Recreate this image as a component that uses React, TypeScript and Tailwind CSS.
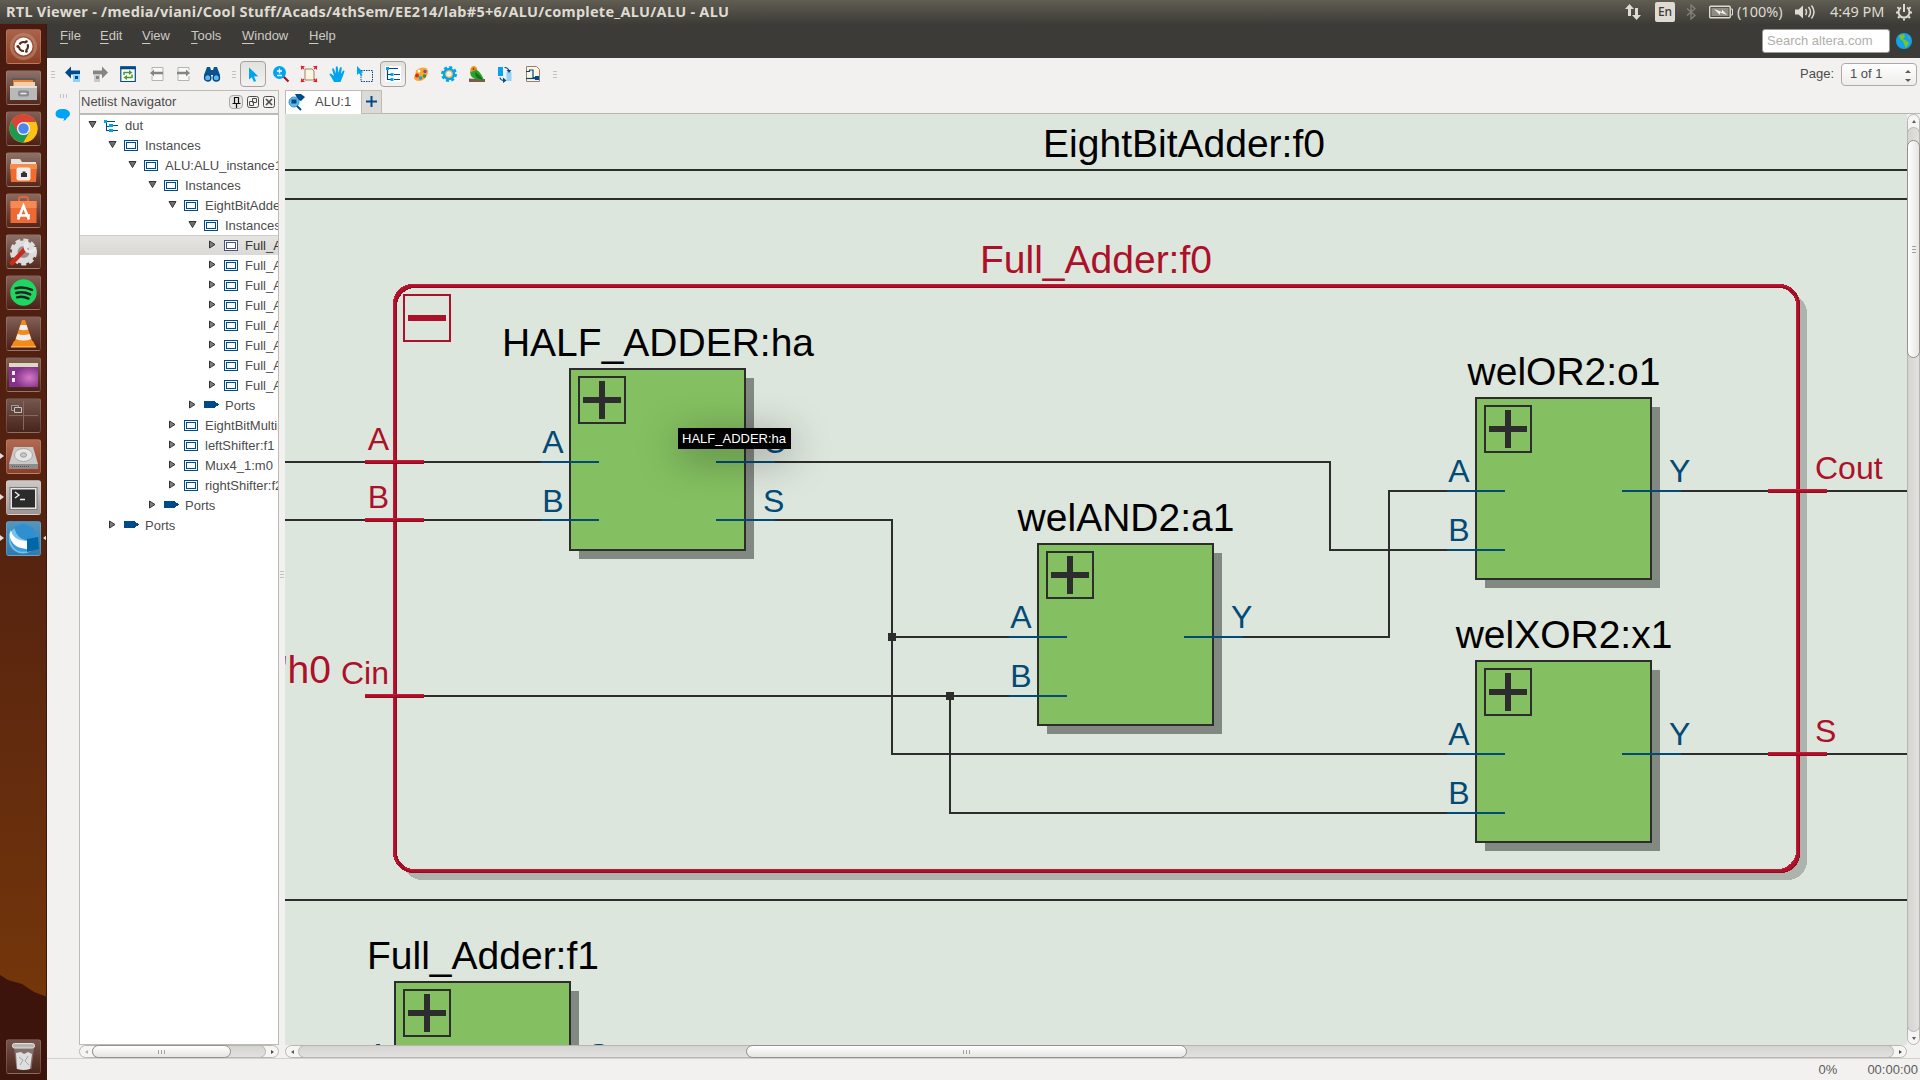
import React from "react";

type Kids = { children?: React.ReactNode };

/* ---------- small helpers ---------- */

function Icon({ size = 16, box = 16, children }: Kids & { size?: number; box?: number }) {
  return (
    <svg width={size} height={size} viewBox={`0 0 ${box} ${box}`} className="block shrink-0 overflow-visible">
      {children}
    </svg>
  );
}

function Grip({ vertical = false }: { vertical?: boolean }) {
  return (
    <div className={vertical ? "flex gap-[2px]" : "flex flex-col gap-[2px]"}>
      {[0, 1, 2].map((i) => (
        <div key={i} className={vertical ? "h-1 w-px bg-[#c4c2be]" : "h-px w-1 bg-[#c4c2be]"} />
      ))}
    </div>
  );
}

/* ---------- launcher ---------- */

const launcher: { bg: string; icon: React.ReactNode; running?: boolean; active?: boolean }[] = [
  {
    bg: "bg-linear-to-b from-[#a8644a] to-[#8e3f24]",
    icon: (
      <Icon size={35} box={35}>
        <circle cx="17.500" cy="17.500" r="12" fill="none" stroke="#c79582" strokeWidth="3" opacity=".5" />
        <circle cx="17.500" cy="17.500" r="9" fill="#fff" />
        <circle cx="17.500" cy="17.500" r="4.500" fill="none" stroke="#5a2a1c" strokeWidth="2.200" strokeDasharray="7.400 2" strokeDashoffset="3" />
        <circle cx="11.800" cy="17.500" r="1.400" fill="#5a2a1c" />
        <circle cx="20.400" cy="12.600" r="1.400" fill="#5a2a1c" />
        <circle cx="20.400" cy="22.400" r="1.400" fill="#5a2a1c" />
      </Icon>
    ),
  },
  {
    bg: "bg-linear-to-b from-[#8d7268] to-[#54291c]",
    icon: (
      <Icon size={35} box={35}>
        <path d="M6 8h23l1 10H5z" fill="#5f5a55" />
        <path d="M7 10h20v8H7z" fill="#f07f35" />
        <path d="M8 12h21v6H8z" fill="#f6cfa7" />
        <path d="M4 16h27v14H4z" fill="#b9b9b9" />
        <path d="M4 16h27v2H4z" fill="#e2e2e2" />
        <rect x="12" y="20.500" width="11" height="6" rx="2" fill="#8b8b8b" />
        <path d="M14.500 23.500h6" stroke="#eee" strokeWidth="1.500" />
      </Icon>
    ),
  },
  {
    bg: "bg-linear-to-b from-[#826056] to-[#4c2016]",
    icon: (
      <Icon size={35} box={35}>
        <circle cx="17.500" cy="17.500" r="14" fill="#fbc116" />
        <path d="M17.500 17.500 5.400 10.500A14 14 0 0 1 29.600 10.500z" fill="#db4437" />
        <path d="M5.400 10.500A14 14 0 0 0 17.500 31.500L23.600 21 17.500 17.500z" fill="#1b9b50" />
        <path d="M17.500 11h12.400A14 14 0 0 1 17.500 31.500L23.500 21z" fill="#fbc116" />
        <path d="M17.500 3.500A14 14 0 0 1 29.800 11H17.500L11.500 21 5.400 10.500A14 14 0 0 1 17.500 3.500z" fill="#db4437" />
        <circle cx="17.500" cy="17.500" r="6.600" fill="#f1f1f1" />
        <circle cx="17.500" cy="17.500" r="5.200" fill="#4a86ee" />
      </Icon>
    ),
  },
  {
    bg: "bg-linear-to-b from-[#8d7268] to-[#54291c]",
    icon: (
      <Icon size={35} box={35}>
        <path d="M5 7h9l2 3h14v8H5z" fill="#e8e2da" />
        <path d="M4 12h27l-1 18H5z" fill="#ee6c30" />
        <path d="M4 12h27v5H4z" fill="#f68c4c" />
        <rect x="10.500" y="15.500" width="14" height="13" rx="2" fill="#f3f0ec" />
        <path d="M15 21h1.500v-1.500h3V21H21v4h-6z" fill="#333" />
      </Icon>
    ),
  },
  {
    bg: "bg-linear-to-b from-[#8d6a5c] to-[#54251a]",
    icon: (
      <Icon size={35} box={35}>
        <path d="M13 11V6q0-2 2-2h5q2 0 2 2v5" fill="none" stroke="#e0673e" strokeWidth="2" />
        <path d="M4.500 8h26v22h-26z" fill="#ee6a35" />
        <path d="M4.500 8h26v7h-26z" fill="#f58a55" />
        <path d="M12 26.500 17.500 13 23 26.500M11 22.500h13" fill="none" stroke="#fff" strokeWidth="2.600" />
      </Icon>
    ),
  },
  {
    bg: "bg-linear-to-b from-[#8d7268] to-[#54291c]",
    icon: (
      <Icon size={35} box={35}>
        <circle cx="17.500" cy="18" r="11.500" fill="#dcdcdc" />
        <circle cx="17.500" cy="18" r="12" fill="none" stroke="#dcdcdc" strokeWidth="3" strokeDasharray="5 3" />
        <circle cx="17.500" cy="18" r="6" fill="#9b8f8b" />
        <path d="M6 29 20 14" stroke="#c92b1f" strokeWidth="4.500" strokeLinecap="round" />
        <path d="m19 15 4-4m-1-3a5 5 0 1 0 7 5" stroke="#e9e9e9" strokeWidth="3" fill="none" />
      </Icon>
    ),
  },
  {
    bg: "bg-linear-to-b from-[#826056] to-[#4c2016]",
    icon: (
      <Icon size={35} box={35}>
        <circle cx="17.500" cy="17.500" r="13.200" fill="#1ed760" />
        <path d="M9.500 13.300q8-2.300 16.500 1.600M10.200 18q7-2 14 1.400M11 22.300q6-1.500 11.500 1.300" fill="none" stroke="#222" strokeWidth="2.400" strokeLinecap="round" />
      </Icon>
    ),
  },
  {
    bg: "bg-linear-to-b from-[#826056] to-[#4c2016]",
    icon: (
      <Icon size={35} box={35}>
        <path d="M8 25h19l3 6H5z" fill="#f08a1a" />
        <path d="M5 30h25v1.500H5z" fill="#ffb04a" />
        <path d="M16 4h3l7.500 22q-9 3-18 0z" fill="#f58a1c" />
        <path d="m14.500 9-1.500 4.500q4.500 1.500 9 0L20.500 9zM11.500 18l-1.700 5q7.700 3 15.400 0l-1.700-5q-6 2-12 0z" fill="#eee" />
      </Icon>
    ),
  },
  {
    bg: "bg-linear-to-b from-[#826056] to-[#4c2016]",
    icon: (
      <Icon size={35} box={35}>
        <defs>
          <radialGradient id="screenGlow" cx="70%" cy="60%">
            <stop offset="0" stopColor="#d47bc6" />
            <stop offset="1" stopColor="#83318b" />
          </radialGradient>
        </defs>
        <path d="M3 7h29v23H3z" fill="url(#screenGlow)" />
        <path d="M3 6h29v4H3z" fill="#dcd8c2" />
        <path d="M6 14h3v4H6zM6 21h3v4H6z" fill="#efe6f0" />
      </Icon>
    ),
  },
  {
    bg: "bg-linear-to-b from-[#75574e] to-[#47241c]",
    icon: (
      <Icon size={35} box={35}>
        <path d="M17.500 3v29M3 17.500h29" stroke="#85695f" />
        <path d="M5.500 7.500h7v5h-7z" fill="#594944" stroke="#a39a96" />
        <path d="M8.500 9.500h7v5h-7z" fill="#594944" stroke="#c9c2be" />
      </Icon>
    ),
  },
  {
    bg: "bg-linear-to-b from-[#b16a52] to-[#8d3f28]",
    running: true,
    icon: (
      <Icon size={35} box={35}>
        <path d="M8 8h19l5 17v5H3v-5z" fill="#c9c9c9" />
        <path d="M3 25h29v5H3z" fill="#8c8c8c" />
        <ellipse cx="17.500" cy="16" rx="9" ry="6.500" fill="#e6e6e6" stroke="#a8a8a8" />
        <ellipse cx="17.500" cy="16" rx="3" ry="2.200" fill="#c9c9c9" stroke="#999" />
        <path d="M6 27.500h17" stroke="#555" strokeDasharray="1 1" />
      </Icon>
    ),
  },
  {
    bg: "bg-linear-to-b from-[#cdc8c6] to-[#9f9694]",
    running: true,
    icon: (
      <Icon size={35} box={35}>
        <rect x="4" y="7.500" width="27" height="22" fill="#e6e6e6" stroke="#777" />
        <rect x="6" y="9.500" width="23" height="18" fill="#2b2b2b" />
        <path d="m9 12 4 3-4 3M14 19.500h5" fill="none" stroke="#eee" strokeWidth="1.400" />
      </Icon>
    ),
  },
  {
    bg: "bg-linear-to-b from-[#5396bf] to-[#3479a8]",
    running: true,
    active: true,
    icon: (
      <Icon size={35} box={35}>
        <circle cx="17" cy="18.500" r="14" fill="#72c1ef" />
        <path d="M8 6.500A14 14 0 0 1 31 18l-9 2Q11 18 8 6.500z" fill="#2f8fcf" />
        <path d="M5 9q2 11 17 11l-1 8Q4 27 3.500 13z" fill="#fff" />
        <path d="M3.500 15q3 12 16 13l3 2Q6 34 3.500 15z" fill="#3a9bdb" />
        <path d="m21 18 11-2 1 12-12 3z" fill="#0067a9" />
      </Icon>
    ),
  },
];

function Tile({ bg, children }: Kids & { bg: string }) {
  return (
    <div className={`h-[35px] w-[35px] overflow-hidden rounded-[3px] border border-white/15 ${bg}`}>
      <div className="-mt-px -ml-px">{children}</div>
    </div>
  );
}

function Launcher() {
  return (
    <aside className="relative flex w-[47px] shrink-0 flex-col items-center overflow-hidden border-r border-[#3a1a10] bg-linear-to-b from-[#4a1a10] via-[#56230f] to-[#7a3a08] pt-[5px] pb-[6px]">
      <svg className="absolute bottom-0 left-0" width="47" height="106" viewBox="0 0 47 106">
        <path d="M0 1 8 6l14 4 12 8 13 5v83H0z" fill="#3c140c" />
      </svg>
      <div className="relative flex flex-col gap-[6px]">
        {launcher.map((l, i) => (
          <div key={i} className="relative">
            <Tile bg={l.bg}>{l.icon}</Tile>
            {l.running && (
              <div className="absolute top-[14px] -left-[6px] border-y-[3px] border-l-4 border-y-transparent border-l-[#e2dedb]" />
            )}
            {l.active && (
              <div className="absolute top-[14px] -right-[6px] border-y-[3px] border-r-4 border-y-transparent border-r-[#e2dedb]" />
            )}
          </div>
        ))}
      </div>
      <div className="relative mt-auto">
        <Tile bg="bg-linear-to-b from-[#74544a] to-[#4a2419]">
          <Icon size={35} box={35}>
            <path d="M8 9h20l-2.500 21h-15z" fill="#8f8580" opacity=".7" />
            <path d="m10 14 5-1 3 2 4-2 4 2-2 15q-6 2-13 0z" fill="#dedede" />
            <path d="m13 18 4 3-3 5m8-9-3 5 4 4" stroke="#a7a7a7" fill="none" />
            <rect x="6.500" y="4.500" width="22" height="4.500" rx="2" fill="#b8b4b1" stroke="#e4e1df" />
          </Icon>
        </Tile>
      </div>
    </aside>
  );
}

/* ---------- top panel ---------- */

function TopPanel() {
  return (
    <header className="flex h-6 shrink-0 items-center bg-linear-to-b from-[#605d52] to-[#3d3c37] pr-[7px] pl-[6px] font-['Noto_Sans',sans-serif] text-[15px] text-[#dfdbd2]">
      <div className="mb-[2px] text-[14.500px] leading-[22px] font-bold tracking-[0.268px] whitespace-nowrap">
        RTL Viewer - /media/viani/Cool Stuff/Acads/4thSem/EE214/lab#5+6/ALU/complete_ALU/ALU - ALU
      </div>
      <div className="ml-auto flex items-center leading-6">
        <svg width="18" height="18" viewBox="0 0 18 18" fill="#dfdbd2">
          <path d="M5.500 1 10 6H7v7H4V6H1zM12.500 17 8 12h3V5h3v7h3z" />
        </svg>
        <span className="ml-[13px] flex h-5 w-5 items-center justify-center rounded-[2px] bg-[#dfdbd2] text-[12px] font-medium text-[#3c3b37]">En</span>
        <svg className="ml-[11px]" width="10" height="16" viewBox="0 0 10 16" fill="none" stroke="#85827a" strokeWidth="1.300">
          <path d="m1 4.500 8 7L5 15V1l4 3.500-8 7" />
        </svg>
        <svg className="ml-[13px]" width="24" height="14" viewBox="0 0 24 14">
          <rect x=".7" y="1.200" width="20.500" height="11.500" rx="1" fill="none" stroke="#dfdbd2" strokeWidth="1.400" />
          <rect x="2.500" y="3" width="17" height="8" fill="#8e8b83" />
          <path d="M22 4h1.500v6H22" fill="none" stroke="#dfdbd2" />
          <path d="m5 4 8 3V4.500l5 5.500-7-2.500V10z" fill="#f3f1ea" />
        </svg>
        <span className="mb-[2px] ml-[4px] w-[46px] text-[14.500px] leading-[22px] whitespace-nowrap">(100%)</span>
        <svg className="ml-[12px]" width="20" height="16" viewBox="0 0 20 16" fill="none" stroke="#dfdbd2" strokeWidth="1.500">
          <path d="M0 5.500h3.500L8 1.500v13l-4.500-4H0z" fill="#dfdbd2" stroke="none" />
          <path d="M10.500 5q2 3 0 6M13.500 3q4 5 0 10M16.500 1.500q5 6.500 0 13" />
        </svg>
        <span className="mb-[2px] ml-[15px] w-[54px] text-[14.500px] leading-[22px] whitespace-nowrap">4:49 PM</span>
        <svg className="ml-[11px]" width="18" height="18" viewBox="0 0 18 18" fill="none" stroke="#dfdbd2">
          <path d="M6 4.500a5.500 5.500 0 1 0 6 0" strokeWidth="2" />
          <path d="M9 1v8" strokeWidth="2" />
          <path d="M2.300 4.300 4 5.500M15.700 4.300 14 5.500M1 9.500h2M17 9.500h-2M3 15l1.500-1.500M15 15l-1.500-1.500M9 17.500v-2" strokeWidth="2" />
        </svg>
      </div>
    </header>
  );
}

const menus = [
  { label: "File", w: "w-[40px]" },
  { label: "Edit", w: "w-[42px]" },
  { label: "View", w: "w-[49px]" },
  { label: "Tools", w: "w-[51px]" },
  { label: "Window", w: "w-[67px]" },
  { label: "Help", w: "w-[40px]" },
];

function MenuBar() {
  return (
    <div className="flex h-[34px] shrink-0 bg-[#3c3b37] pr-2 pl-[13px]">
      <nav className="flex pt-[4px] text-[13px] leading-4 text-[#cdcac2]">
        {menus.map((m) => (
          <div key={m.label} className={m.w}>
            <span className="underline underline-offset-[3px]">{m.label[0]}</span>
            {m.label.slice(1)}
          </div>
        ))}
      </nav>
      <div className="ml-auto flex items-start pt-[5px]">
        <div className="flex h-[24px] w-[128px] items-center rounded-[3px] border border-[#9d9a94] bg-white pl-[4px] text-[13px] text-[#b0aeaa]">
          Search altera.com
        </div>
        <svg className="mt-[4px] ml-[6px]" width="16" height="16" viewBox="0 0 16 16">
          <circle cx="8" cy="8" r="8" fill="#12a3ee" />
          <path d="M3 2.500 8 1l1 3-2 2 4 2 2 2-3 5-2-4-1-3-3-2zM12 3l2 2-1 1z" fill="#7fc41c" />
        </svg>
      </div>
    </div>
  );
}

/* ---------- toolbar ---------- */

const NAVY = "#004b87";
const SKY = "#00a4ef";

const hierarchy = (
  <>
    <path d="M2.500 2v12M2.500 8.500h4M2.500 13.500h4M4 2.500h9M9 8.500h6M9 13.500h6" stroke={NAVY} strokeWidth="1.200" fill="none" />
    <path d="M1 1h3v3H1zM5.500 7h3v3h-3zM5.500 12h3v3h-3z" fill={SKY} />
  </>
);

const tools: { w: string; node: React.ReactNode; pressed?: boolean }[] = [
  { w: "w-[12px]", node: <Grip /> },
  {
    w: "w-[27px]",
    node: (
      <Icon>
        <path d="M0 6.500 6 .5v4h9v4H6v4z" fill={NAVY} />
        <path d="M8 8h7v8H8z" fill="#8fd0f5" />
        <path d="M10 10h3v3h-3z" fill={NAVY} />
      </Icon>
    ),
  },
  {
    w: "w-[27px]",
    node: (
      <Icon>
        <path d="M16 6.500 10 .5v4H1v4h9v4z" fill="#858585" />
        <path d="M2 8h6v8H2z" fill="#c9c9c9" />
        <path d="M4 10h3v3H4z" fill="#858585" />
      </Icon>
    ),
  },
  {
    w: "w-[30px]",
    node: (
      <Icon>
        <path d="M.8 1h14.500v14.500H.8z" fill="#fff" stroke={NAVY} strokeWidth="1.200" />
        <path d="M.3.300h15.500v3H.3z" fill={NAVY} />
        <path d="M4 9V6.500h6M12 8.500v3H6" fill="none" stroke="#4c9b2f" strokeWidth="1.500" />
        <path d="m9 4 3.500 2.500L9 9zM7 9l-3.500 2.500L7 14z" fill="#4c9b2f" />
      </Icon>
    ),
  },
  {
    w: "w-[27px]",
    node: (
      <Icon>
        <path d="M3 4V1.500h11v13H3V10" fill="#f8f8f8" stroke="#b4b4b4" />
        <path d="m1 7 4-3.500v2.200h9v2.600H5v2.200z" fill="#858585" />
      </Icon>
    ),
  },
  {
    w: "w-[27px]",
    node: (
      <Icon>
        <path d="M13 4V1.500H2v13h11V10" fill="#f8f8f8" stroke="#b4b4b4" />
        <path d="m14 7-4-3.500v2.200H1v2.600h9v2.200z" fill="#858585" />
      </Icon>
    ),
  },
  {
    w: "w-[30px]",
    node: (
      <Icon>
        <path d="M3 1h3l1 3h2l1-3h3l3 8v4H9V9H7v4H0V9z" fill="#0a5290" />
        <circle cx="3.700" cy="11.800" r="3.200" fill="#63b7e6" stroke={NAVY} strokeWidth="1.400" />
        <circle cx="12.300" cy="11.800" r="3.200" fill="#63b7e6" stroke={NAVY} strokeWidth="1.400" />
      </Icon>
    ),
  },
  { w: "w-[13px]", node: <Grip /> },
  {
    w: "w-[26px]",
    pressed: true,
    node: (
      <Icon>
        <path d="M4 1.500v12l2.800-2.300L9 16l2-1-2-4.500 4.200-.3z" fill={SKY} />
      </Icon>
    ),
  },
  {
    w: "w-[29px]",
    node: (
      <Icon>
        <path d="m10.500 10.500 5 5" stroke="#b01020" strokeWidth="2.200" />
        <circle cx="6.500" cy="6.500" r="6.500" fill={SKY} />
        <path d="M6.500 2.500v5M4 5h5M4 9.500h5" stroke="#fff" strokeWidth="1.300" />
      </Icon>
    ),
  },
  {
    w: "w-[28px]",
    node: (
      <Icon>
        <path d="M4 3h7l2 2v9H4z" fill="#fdf6de" stroke="#a08070" />
        <path d="m0 0 3 3M16 0l-3 3M0 16l3-3M16 16l-3-3" stroke="#e5202a" strokeWidth="1.200" />
        <path d="M0 0h4L0 4zM16 0h-4l4 4zM0 16h4l-4-4zM16 16h-4l4-4z" fill="#e5202a" />
      </Icon>
    ),
  },
  {
    w: "w-[28px]",
    node: (
      <Icon>
        <path d="M5 16Q3 12 .5 8.500q.5-1.500 2-.5L5 10 3 3q1-1.500 2 0l1.700 4.500L6.800 1q1-1.500 2 0l.5 6L11 1.500q1.300-1 1.800.3L12 8l2-3.500q1.500-.5 1.500 1L13.500 11l-2 5z" fill={SKY} />
      </Icon>
    ),
  },
  {
    w: "w-[28px]",
    node: (
      <Icon>
        <path d="M4 4.500h11.500v11H4z" fill="none" stroke={NAVY} strokeDasharray="1.500 1" />
        <path d="M0 0v9l2-1.800L4 10l1.500-.8L4 6.500h2.500z" fill={SKY} />
      </Icon>
    ),
  },
  { w: "w-[28px]", pressed: true, node: <div className="bg-white"><Icon>{hierarchy}</Icon></div> },
  {
    w: "w-[28px]",
    node: (
      <Icon>
        <path d="M3 4.500Q8 0 13 2q3 2 1.500 6Q12 15 6 15q-5 0-5-4 .5-2 2-2Q2 7 3 4.500z" fill="#fba726" />
        <circle cx="4" cy="9.500" r="2" fill="#d42a2a" />
        <circle cx="6" cy="5" r="1.500" fill="#fff" />
        <circle cx="7.500" cy="12" r="1.800" fill="#2196f3" />
        <circle cx="11.500" cy="10" r="1.700" fill="#1d9a4a" />
        <circle cx="12" cy="5.500" r="1.700" fill="#8a3fc0" />
      </Icon>
    ),
  },
  {
    w: "w-[28px]",
    node: (
      <Icon>
        <circle cx="8" cy="8" r="6.600" fill="none" stroke={SKY} strokeWidth="2.800" strokeDasharray="2.900 2.290" />
        <circle cx="8" cy="8" r="4.700" fill="none" stroke={SKY} strokeWidth="3" />
        <circle cx="8" cy="8" r="3.300" fill="#f2f1ef" stroke="#e0b548" strokeWidth="1.200" />
      </Icon>
    ),
  },
  {
    w: "w-[28px]",
    node: (
      <Icon>
        <path d="M0 12.500 8 13h8v3H0z" fill="#7b5a50" />
        <path d="M1 4 2.500 1q2-1.500 4-.5 2 1 1.500 4l-3 3z" fill="#f28c1c" />
        <path d="M1 5q3 1.500 6-1.500 5 2.500 8 10.500l-6-.5Q1 13 1 5z" fill="#2ba22b" />
        <path d="M6 6q5 3 8 8l-5-1.500Q6 10 6 6z" fill="#15701f" />
        <circle cx="4.500" cy="3" r=".8" fill="#222" />
      </Icon>
    ),
  },
  {
    w: "w-[28px]",
    node: (
      <Icon>
        <path d="M1 1h5v9H1z" fill={SKY} />
        <path d="M9.500 6h5v9h-5z" fill="#92d2f6" />
        <path d="M7.500 1.500q4 0 4.500 4M3 11.500q.5 3 4.500 3" fill="none" stroke={NAVY} strokeWidth="1.200" />
        <path d="M9.500 4h5L12 7zM6 11.500l3.500 3L6 17z" fill={NAVY} />
      </Icon>
    ),
  },
  {
    w: "w-[28px]",
    node: (
      <Icon>
        <path d="M1.500.500h10l3 3v12h-13z" fill="#fdf6de" stroke="#9a7f70" />
        <path d="M1 5.500h3.500V4H8v7.500h3" fill="none" stroke={NAVY} strokeWidth="1.200" />
        <path d="M1 12.500h13" stroke={NAVY} strokeWidth="1.200" />
        <path d="M10 10h4v4h-4z" fill={NAVY} />
      </Icon>
    ),
  },
  { w: "w-[16px]", node: <Grip /> },
];

function Toolbar() {
  return (
    <div className="flex h-8 shrink-0 items-center pr-[3px]">
      {tools.map((t, i) => (
        <div key={i} className={`flex shrink-0 items-center justify-center ${t.w}`}>
          {t.pressed ? (
            <div className="flex h-[26px] w-[26px] items-center justify-center rounded-[4px] border border-[#a5a29d] bg-linear-to-b from-[#e3e1de] to-[#f3f2f0]">
              {t.node}
            </div>
          ) : (
            t.node
          )}
        </div>
      ))}
      <span className="ml-auto text-[13px] text-[#4c4c4c]">Page:</span>
      <div className="ml-[7px] flex h-[23px] w-[76px] items-center rounded-[4px] border border-[#aeaba6] bg-linear-to-b from-white to-[#eeedeb] pr-[5px] pl-[8px] text-[13px] text-[#4c4c4c]">
        1 of 1
        <div className="ml-auto flex flex-col gap-[6px] pt-[3px]">
          <div className="border-x-[3px] border-b-[3px] border-x-transparent border-b-[#5c5c5c]" />
          <div className="border-x-[3px] border-t-[3px] border-x-transparent border-t-[#5c5c5c]" />
        </div>
      </div>
    </div>
  );
}

/* ---------- scroll bars ---------- */

function HScroll({ lead, thumb, dim = false }: { lead: string; thumb: string; dim?: boolean }) {
  return (
    <div className="flex h-[13px] min-w-0 flex-1 rounded-full border border-[#b9b6b1] bg-[#f6f5f4]">
      <div className="flex w-[12px] shrink-0 items-center justify-center">
        <div className={`border-y-[2.500px] border-r-[3px] border-y-transparent ${dim ? "border-r-[#b5b3b0]" : "border-r-[#5c5c5c]"}`} />
      </div>
      <div className="-my-px flex min-w-0 flex-1 rounded-full border border-[#b9b6b1] bg-linear-to-b from-[#d6d4d1] to-[#e3e1df]">
        <div className={`shrink-0 ${lead}`} />
        <div className={`-my-px -ml-px flex shrink-0 items-center justify-center rounded-full border border-[#94918c] bg-linear-to-b from-white to-[#e6e5e3] ${thumb}`}>
          <div className="flex gap-[2px]">
            <div className="h-1 w-px bg-[#a5a29d]" />
            <div className="h-1 w-px bg-[#a5a29d]" />
            <div className="h-1 w-px bg-[#a5a29d]" />
          </div>
        </div>
      </div>
      <div className="flex w-[12px] shrink-0 items-center justify-center">
        <div className="border-y-[2.500px] border-l-[3px] border-y-transparent border-l-[#4c4c4c]" />
      </div>
    </div>
  );
}

function VScroll() {
  return (
    <div className="flex w-[13px] shrink-0 flex-col rounded-full border border-[#b9b6b1] bg-[#f6f5f4]">
      <div className="flex h-[12px] shrink-0 items-center justify-center">
        <div className="border-x-[2.500px] border-b-[3px] border-x-transparent border-b-[#5c5c5c]" />
      </div>
      <div className="-mx-px flex flex-1 flex-col rounded-full border border-[#b9b6b1] bg-linear-to-r from-[#d6d4d1] to-[#e3e1df]">
        <div className="h-[12px] shrink-0" />
        <div className="-mx-px flex h-[218px] flex-col items-center justify-center gap-[2px] rounded-full border border-[#94918c] bg-linear-to-r from-white to-[#e6e5e3]">
          <div className="h-px w-1 bg-[#a5a29d]" />
          <div className="h-px w-1 bg-[#a5a29d]" />
          <div className="h-px w-1 bg-[#a5a29d]" />
        </div>
      </div>
      <div className="flex h-[12px] shrink-0 items-center justify-center">
        <div className="border-x-[2.500px] border-t-[3px] border-x-transparent border-t-[#5c5c5c]" />
      </div>
    </div>
  );
}

/* ---------- netlist navigator ---------- */

type Row = { level: number; label: string; kind: "root" | "inst" | "port"; open?: boolean; selected?: boolean };

const rows: Row[] = [
  { level: 0, label: "dut", kind: "root", open: true },
  { level: 1, label: "Instances", kind: "inst", open: true },
  { level: 2, label: "ALU:ALU_instance1", kind: "inst", open: true },
  { level: 3, label: "Instances", kind: "inst", open: true },
  { level: 4, label: "EightBitAdder:f0", kind: "inst", open: true },
  { level: 5, label: "Instances", kind: "inst", open: true },
  { level: 6, label: "Full_Adder:f0", kind: "inst", selected: true },
  { level: 6, label: "Full_Adder:f1", kind: "inst" },
  { level: 6, label: "Full_Adder:f2", kind: "inst" },
  { level: 6, label: "Full_Adder:f3", kind: "inst" },
  { level: 6, label: "Full_Adder:f4", kind: "inst" },
  { level: 6, label: "Full_Adder:f5", kind: "inst" },
  { level: 6, label: "Full_Adder:f6", kind: "inst" },
  { level: 6, label: "Full_Adder:f7", kind: "inst" },
  { level: 5, label: "Ports", kind: "port" },
  { level: 4, label: "EightBitMultiplier:m0", kind: "inst" },
  { level: 4, label: "leftShifter:f1", kind: "inst" },
  { level: 4, label: "Mux4_1:m0", kind: "inst" },
  { level: 4, label: "rightShifter:f2", kind: "inst" },
  { level: 3, label: "Ports", kind: "port" },
  { level: 1, label: "Ports", kind: "port" },
];

function TreeRow({ row }: { row: Row }) {
  const ink = row.selected ? "#46527a" : NAVY;
  return (
    <div
      className={`flex h-5 items-center border-t whitespace-nowrap ${row.selected ? "border-[#cfcdca] bg-linear-to-b from-[#e6e4e1] to-[#dbd9d6]" : "border-transparent"}`}
      style={{ paddingLeft: 8 + row.level * 20 }}
    >
      <svg width="9" height="9" viewBox="0 0 9 9" className="mb-[3px] shrink-0">
        {row.open ? (
          <path d="M1 1.500h7L4.500 7.500z" fill="#6f6f6f" stroke="#333" />
        ) : (
          <path d="M1.500 1v7l5.500-3.500z" fill="#7c7c7c" stroke="#333" />
        )}
      </svg>
      <svg width="16" height="12" viewBox="0 0 16 12" className="ml-[7px] shrink-0 overflow-visible" shapeRendering="crispEdges">
        {row.kind === "root" && (
          <>
            <path d="M2.500 1v10M2.500 6.500h4M2.500 10.500h4M3 1.500h8M8 5.500h6M8 10.500h6" stroke={NAVY} fill="none" />
            <path d="M0 0h3v3H0zM5 4h4v3H5zM5 9h4v3H5z" fill={SKY} />
          </>
        )}
        {row.kind === "inst" && (
          <path d="M.500.500h13v10H.500zM2.500 2.500h9v6h-9z" fill="#fff" stroke={ink} />
        )}
        {row.kind === "port" && <path d="M0 1h10l5 3v1l-5 3H0z" fill={NAVY} />}
      </svg>
      <span className={`ml-[5px] text-[13px] leading-5 ${row.selected ? "text-[#333]" : "text-[#4c4c4c]"}`}>{row.label}</span>
    </div>
  );
}

function Navigator() {
  return (
    <section className="flex w-[200px] shrink-0 flex-col">
      <div className="flex h-[25px] shrink-0 items-center border border-b-2 border-[#bdbbb6] pr-[3px] pl-px text-[13px] text-[#4c4c4c]">
        Netlist Navigator
        <div className="ml-auto flex items-center gap-[4px]">
          <div className="flex h-[14px] w-[14px] items-center justify-center rounded-[4px] border border-[#aaa8a3] bg-[#e9e7e4]">
            <Icon size={12} box={12}>
              <path d="M4.500 1v6M8.500 1v6M4 1.500h5M2.500 7.500h8M6.500 8v4" stroke="#111" fill="none" strokeWidth="1.200" />
            </Icon>
          </div>
          <Icon size={12} box={12}>
            <rect x=".5" y=".5" width="11" height="11" rx="2" fill="none" stroke="#4c4c4c" />
            <path d="M5.500 2.500h4v4h-4zM2.500 5.500h4v4h-4z" fill="#f2f1ef" stroke="#4c4c4c" />
          </Icon>
          <Icon size={12} box={12}>
            <rect x=".5" y=".5" width="11" height="11" rx="2" fill="none" stroke="#4c4c4c" />
            <path d="m3 3 6 6M9 3 3 9" stroke="#4c4c4c" strokeWidth="1.700" />
          </Icon>
        </div>
      </div>
      <div className="min-h-0 flex-1 overflow-hidden border-x border-b border-[#bdbbb6] bg-white">
        {rows.map((r, i) => (
          <TreeRow key={i} row={r} />
        ))}
      </div>
      <div className="flex h-[13px]">
        <HScroll lead="w-0" thumb="w-[139px]" dim />
      </div>
    </section>
  );
}

/* ---------- schematic ---------- */

const INK = "#2d2d2d";
const PIN = "#034a75";
const RED = "#ad1029";

function Port({ x, y, label, side, dy = 9 }: { x: number; y: number; label: string; side: "l" | "r"; dy?: number }) {
  const left = side === "l";
  return (
    <g>
      <path d={left ? `M${x - 29} ${y}h58` : `M${x - 29} ${y}h59`} stroke={PIN} strokeWidth="2" />
      <text x={left ? x - 6.5 : x + 18} y={y - dy} fontSize="32" fill={PIN} textAnchor={left ? "end" : "start"}>
        {label}
      </text>
    </g>
  );
}

function Block({ x, y, name, outs, b = 152 }: { x: number; y: number; name: string; outs: string[]; b?: number }) {
  return (
    <g>
      <rect x={x + 9} y={y + 9} width="175" height="181" fill="#828882" />
      <rect x={x} y={y} width="175" height="181" fill="#84c061" stroke={INK} strokeWidth="2" />
      <rect x={x + 9} y={y + 8} width="46" height="46" fill="none" stroke={INK} strokeWidth="2" />
      <rect x={x + 13} y={y + 28} width="38" height="6" fill={INK} />
      <rect x={x + 29} y={y + 12} width="6" height="38" fill={INK} />
      <text x={x + 88} y={y - 13} fontSize="39" fill="#000" textAnchor="middle">
        {name}
      </text>
      <Port x={x} y={y + 93} label="A" side="l" />
      <Port x={x} y={y + b} label="B" side="l" dy={b === 152 ? 9 : 8} />
      {outs.map((o, i) => (
        <Port key={o} x={x + 175} y={y + (i ? b : 93)} label={o} side="r" dy={i ? 8 : 9} />
      ))}
    </g>
  );
}

function RedStub({ x, y }: { x: number; y: number }) {
  return (
    <g>
      <rect x={x} y={y - 2} width="59" height="4" fill={RED} />
      <rect x={x} y={y - 2} width="59" height="1" fill="#d11534" />
      <rect x={x + 1} y={y + 1} width="58" height="1" fill="#8b0d21" />
    </g>
  );
}

function Schematic() {
  return (
    <svg
      width="1622"
      height="931"
      viewBox="285 114 1622 931"
      className="block bg-[#dde6dd] font-['Liberation_Sans',Arial,sans-serif]"
      shapeRendering="crispEdges"
    >
      <path d="M285 170H1907M285 199H1907M285 900H1907" stroke={INK} strokeWidth="2" />
      <text x="1184" y="157" fontSize="39" textAnchor="middle">EightBitAdder:f0</text>
      <text x="1096" y="273" fontSize="39" fill={RED} textAnchor="middle">Full_Adder:f0</text>

      {/* expanded instance frame */}
      <rect x="403" y="294" width="1404" height="586" rx="19" fill="#adb3ad" />
      <rect x="395" y="286" width="1403" height="585" rx="19" fill="#dde6dd" stroke={RED} strokeWidth="4" />
      <rect x="393.500" y="284.500" width="1403" height="585" rx="19" fill="none" stroke="#cf1535" />
      <rect x="396.500" y="287.500" width="1403" height="585" rx="19" fill="none" stroke="#8b0d21" />
      <rect x="404" y="295" width="46" height="46" fill="none" stroke={RED} strokeWidth="2" />
      <rect x="408" y="315" width="38" height="6" fill={RED} />

      {/* nets */}
      <g fill="none" stroke={INK} strokeWidth="2">
        <path d="M285 462H541M285 520H541M424 696H1009" />
        <path d="M775 462H1330V550H1447" />
        <path d="M775 520H892V754H1447" />
        <path d="M892 637H1009" />
        <path d="M950 696V813H1447" />
        <path d="M1242 637H1389V491H1447" />
        <path d="M1681 491H1907M1681 754H1907" />
      </g>
      <path d="M888 633h8v8h-8zM946 692h8v8h-8z" fill={INK} />

      <Block x={570} y={369} name="HALF_ADDER:ha" outs={["C", "S"]} b={151} />
      <Block x={1038} y={544} name="welAND2:a1" outs={["Y"]} />
      <Block x={1476} y={398} name="welOR2:o1" outs={["Y"]} />
      <Block x={1476} y={661} name="welXOR2:x1" outs={["Y"]} />
      <Block x={395} y={982} name="Full_Adder:f1" outs={["S"]} />

      <RedStub x={365} y={462} />
      <RedStub x={365} y={520} />
      <RedStub x={365} y={696} />
      <RedStub x={1768} y={491} />
      <RedStub x={1768} y={754} />
      <g fontSize="32" fill={RED}>
        <text x="389" y="450" textAnchor="end">A</text>
        <text x="389" y="508" textAnchor="end">B</text>
        <text x="389" y="684" textAnchor="end">Cin</text>
        <text x="1815" y="479">Cout</text>
        <text x="1815" y="742">S</text>
        <text x="331" y="683" fontSize="39" textAnchor="end">'h0</text>
      </g>
    </svg>
  );
}

function Viewer() {
  return (
    <section className="flex min-w-0 flex-1 flex-col">
      <div className="flex h-6 shrink-0">
        <div className="flex w-[76px] items-center border-t border-l border-[#bdbbb6] bg-white pb-[2px] pl-[2px] text-[13px] text-[#4c4c4c]">
          <Icon>
            <path d="M7 0h6l4 3-4 4-3-1z" fill={NAVY} />
            <circle cx="6" cy="8" r="5" fill="#5fb9ea" stroke="#3a94cc" />
            <path d="M3.500 5.500h5v4h-5z" fill={NAVY} />
            <path d="m9 12 4 4" stroke={NAVY} strokeWidth="2" />
          </Icon>
          <span className="ml-[11px]">ALU:1</span>
        </div>
        <div className="flex w-[21px] items-center justify-center border border-[#bdbbb6] bg-[#dcdad7] pb-[2px]">
          <svg width="11" height="11" viewBox="0 0 11 11">
            <path d="M5.500 0v11M0 5.500h11" stroke={NAVY} strokeWidth="2" />
          </svg>
        </div>
        <div className="flex-1 border-b border-[#b5b8b0]" />
      </div>
      <div className="flex h-[931px] shrink-0">
        <div className="relative w-[1622px] overflow-hidden">
          <Schematic />
          <div className="absolute top-[314px] left-[393px] flex h-[21px] w-[113px] items-center bg-black pl-[4px] text-[13px] text-white shadow-[0_8px_40px_rgba(0,0,0,0.4)]">
            HALF_ADDER:ha
          </div>
        </div>
        <VScroll />
      </div>
      <div className="flex h-[13px] pr-[13px]">
        <HScroll lead="w-[448px]" thumb="w-[441px]" />
      </div>
    </section>
  );
}

export default function App() {
  return (
    <div className="flex h-[1080px] w-[1920px] flex-col overflow-hidden bg-[#f2f1ef] font-['Liberation_Sans',Arial,sans-serif]">
      <TopPanel />
      <div className="flex min-h-0 flex-1">
        <Launcher />
        <main className="flex min-w-0 flex-1 flex-col">
          <MenuBar />
          <Toolbar />
          <div className="flex h-[968px] shrink-0">
            <div className="flex w-8 shrink-0 flex-col items-center pt-[4px]">
              <Grip vertical />
              <svg className="mt-[10px]" width="16" height="14" viewBox="0 0 16 14">
                <path d="M7.500 1C12 1 15 3 15 6q0 2.500-3 4-1 2.500-4 3 1.500-1.500 1-2.500Q.500 10.500.500 6 .500 1 7.500 1z" fill="#00a4f5" />
              </svg>
            </div>
            <Navigator />
            <div className="flex w-[6px] shrink-0 items-center justify-center">
              <Grip />
            </div>
            <Viewer />
          </div>
          <footer className="flex flex-1 items-center justify-end gap-[30px] border-t border-[#d3d1cd] pr-[2px] text-[13px] text-[#5c5c5c]">
            <span>0%</span>
            <span>00:00:00</span>
          </footer>
        </main>
      </div>
    </div>
  );
}
